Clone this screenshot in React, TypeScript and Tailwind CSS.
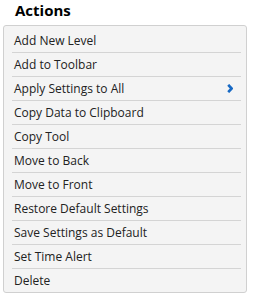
const ITEMS = [
  "Add New Level",
  "Add to Toolbar",
  "Apply Settings to All",
  "Copy Data to Clipboard",
  "Copy Tool",
  "Move to Back",
  "Move to Front",
  "Restore Default Settings",
  "Save Settings as Default",
  "Set Time Alert",
  "Delete",
];

export default function App() {
  return (
    <div className="w-[253px] h-[299px] bg-white pl-[3px] pr-[6px] font-['Open_Sans',sans-serif] text-[#222]">
      <h2 className="pl-3 text-[15px] font-bold leading-5 text-black">Actions</h2>
      <div className="mt-[5px] rounded-[3px] border border-[#d0d0d0] bg-[#f4f4f4] pl-2 pr-[5px] pt-[3px]">
        {ITEMS.map((label, i) => (
          <div
            key={label}
            className={`flex items-center justify-between pl-[2px] pr-[8px] text-[12px] ${
              i < ITEMS.length - 1 ? "h-6 border-b border-[#d4d4d4]" : "h-[23px]"
            }`}
          >
            <span>{label}</span>
            {label === "Apply Settings to All" && (
              <svg width="6" height="9" viewBox="0 0 6 9">
                <path d="M1.2 0.8 L4.6 4.5 L1.2 8.2" fill="none" stroke="#1769c4" strokeWidth="2.6" />
              </svg>
            )}
          </div>
        ))}
      </div>
    </div>
  );
}
